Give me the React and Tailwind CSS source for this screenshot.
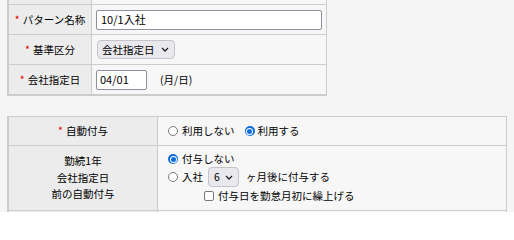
import React from "react";

const font = { fontFamily: '"Noto Sans CJK JP", "Noto Sans", sans-serif' };

const Req = () => <span className="text-[#e50000] mr-[3px]">*</span>;

const Radio = ({ checked }) =>
  checked ? (
    <span className="w-[10px] h-[10px] rounded-full bg-[#0a6cdf] flex items-center justify-center shrink-0">
      <span className="w-[7px] h-[7px] rounded-full bg-white flex items-center justify-center">
        <span className="w-[5px] h-[5px] rounded-full bg-[#0a6cdf]" />
      </span>
    </span>
  ) : (
    <span className="w-[10px] h-[10px] rounded-full border border-[#7a7a7a] bg-white shrink-0" />
  );

const Chevron = () => (
  <svg width="8" height="5" viewBox="0 0 8 5" className="shrink-0">
    <path d="M1 1l3 3 3-3" fill="none" stroke="#222" strokeWidth="1.3" />
  </svg>
);

const Select = ({ value, className = "" }) => (
  <div
    className={`flex items-center justify-between rounded-[4px] border border-[#c3c3cb] bg-[#e9e9ed] ${className}`}
  >
    <span>{value}</span>
    <Chevron />
  </div>
);

export default function App() {
  return (
    <div className="w-[514px] h-[212px] overflow-hidden bg-[#f5f5f5] text-[10.5px] text-black" style={font}>
      {/* upper table */}
      <div className="ml-[7px] w-[320px] border-l-2 border-r border-b-2 border-[#cccccc]">
        <div className="flex h-[5px] border-b border-[#cccccc]">
          <div className="w-[83px] bg-[#ececec] border-r border-[#cccccc]" />
          <div className="flex-1 bg-[#f7f7f7]" />
        </div>
        <div className="flex h-[30px] border-b border-[#cccccc]">
          <div className="w-[83px] bg-[#ececec] border-r border-[#cccccc] flex items-center justify-center">
            <Req />パターン名称
          </div>
          <div className="flex-1 bg-[#f7f7f7] flex items-center pl-[4px]">
            <div className="w-[226px] h-[20px] border border-[#8f8f9d] rounded-[2px] bg-white flex items-center pl-[4px] text-[11px]">
              10/1入社
            </div>
          </div>
        </div>
        <div className="flex h-[30px] border-b border-[#cccccc]">
          <div className="w-[83px] bg-[#ececec] border-r border-[#cccccc] flex items-center justify-center">
            <Req />基準区分
          </div>
          <div className="flex-1 bg-[#f7f7f7] flex items-center pl-[5px]">
            <Select value="会社指定日" className="w-[78px] h-[19px] pl-[4px] pr-[5px]" />
          </div>
        </div>
        <div className="flex h-[29px]">
          <div className="w-[83px] bg-[#ececec] border-r border-[#cccccc] flex items-center justify-center">
            <Req />会社指定日
          </div>
          <div className="flex-1 bg-[#f7f7f7] flex items-center pl-[4px] gap-[13px]">
            <div className="w-[51px] h-[20px] border border-[#8f8f9d] rounded-[2px] bg-white flex items-center pl-[3px] text-[11px]">
              04/01
            </div>
            <span>(月/日)</span>
          </div>
        </div>
      </div>

      {/* lower table */}
      <div className="mt-[20px] ml-[7px] w-[500px] border-l-2 border-r border-t border-[#cccccc]">
        <div className="flex h-[29px] border-b border-[#cccccc]">
          <div className="w-[149px] bg-[#ececec] border-r border-[#cccccc] flex items-center justify-center">
            <Req />自動付与
          </div>
          <div className="flex-1 bg-[#f7f7f7] flex items-center pl-[10px]">
            <Radio />
            <span className="ml-[4px]">利用しない</span>
            <span className="ml-[10px]">
              <Radio checked />
            </span>
            <span className="ml-[3px]">利用する</span>
          </div>
        </div>
        <div className="flex h-[65px] border-b border-[#cccccc]">
          <div className="w-[149px] bg-[#ececec] border-r border-[#cccccc] flex flex-col items-center justify-center leading-[16.5px]">
            <span>勤続1年</span>
            <span>会社指定日</span>
            <span>前の自動付与</span>
          </div>
          <div className="flex-1 bg-[#f7f7f7] flex flex-col pl-[10px] pt-[5px]">
            <div className="flex items-center h-[16px]">
              <Radio checked />
              <span className="ml-[4px]">付与しない</span>
            </div>
            <div className="flex items-center h-[20px]">
              <Radio />
              <span className="ml-[4px]">入社</span>
              <Select value="6" className="ml-[5px] w-[31px] h-[20px] pl-[5px] pr-[5px]" />
              <span className="ml-[7px]">ヶ月後に付与する</span>
            </div>
            <div className="flex items-center h-[16px] mt-[1px] pl-[36px]">
              <span className="w-[10px] h-[10px] border border-[#7a7a7a] rounded-[2px] bg-white shrink-0" />
              <span className="ml-[4px]">付与日を勤怠月初に繰上げる</span>
            </div>
          </div>
        </div>
        <div className="flex h-[10px]">
          <div className="w-[149px] bg-[#ececec] border-r border-[#cccccc]" />
          <div className="flex-1 bg-[#f7f7f7]" />
        </div>
      </div>
    </div>
  );
}
